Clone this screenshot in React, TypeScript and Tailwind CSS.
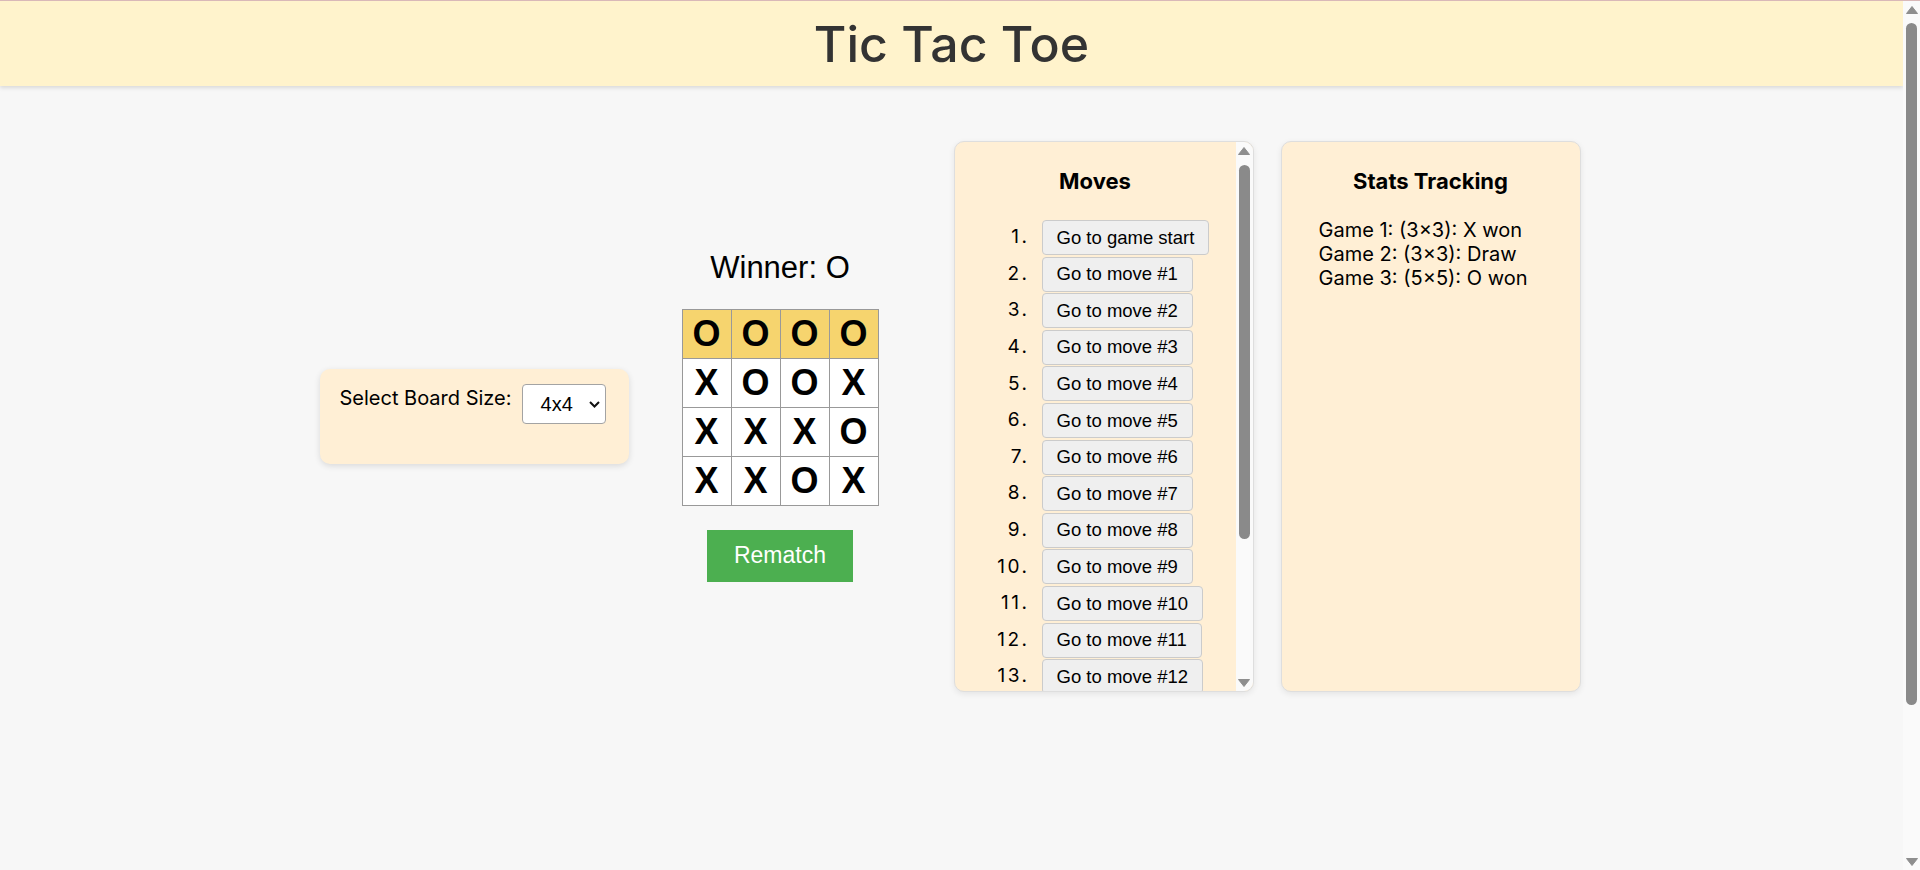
import React from 'react';

type Cell = 'X' | 'O';

const board: Cell[] = ['O', 'O', 'O', 'O', 'X', 'O', 'O', 'X', 'X', 'X', 'X', 'O', 'X', 'X', 'O', 'X'];
const winLine = [0, 1, 2, 3];

const history = Array.from({ length: 17 }, (_, i) => (i === 0 ? 'Go to game start' : `Go to move #${i}`));

const stats = ['Game 1: (3×3): X won', 'Game 2: (3×3): Draw', 'Game 3: (5×5): O won'];

// classic scrollbar look, drawn since the headless page hides native ones
const Scrollbar: React.FC<{ thumbTop: number; thumbHeight: number; className?: string }> = ({
  thumbTop,
  thumbHeight,
  className = '',
}) => (
  <div className={`flex w-[17px] shrink-0 flex-col bg-[#fafafa] ${className}`}>
    <div className="flex h-[17px] items-center justify-center">
      <svg width="12" height="8" viewBox="0 0 12 8">
        <polygon points="6,0.5 11.5,7.5 0.5,7.5" fill="#8e8e8e" strokeLinejoin="round" stroke="#8e8e8e" strokeWidth="1" />
      </svg>
    </div>
    <div className="flex-1">
      <div className="mx-auto w-[11px] rounded-full bg-[#8a8a8a]" style={{ marginTop: thumbTop, height: thumbHeight }} />
    </div>
    <div className="flex h-[17px] items-center justify-center">
      <svg width="12" height="8" viewBox="0 0 12 8">
        <polygon points="0.5,0.5 11.5,0.5 6,7.5" fill="#8e8e8e" strokeLinejoin="round" stroke="#8e8e8e" strokeWidth="1" />
      </svg>
    </div>
  </div>
);

const BoardSizePicker: React.FC = () => (
  <div className="flex h-[95px] w-[309px] shrink-0 items-start gap-[10px] rounded-[10px] bg-[#ffefd5] px-[20px] pt-[15px] shadow-[0_2px_6px_rgba(0,0,0,0.12)]">
    <label className="text-[20px] leading-[29px]">Select Board Size:</label>
    <div className="relative h-[40px] w-[84px] rounded-[4px] border border-[#a3a3a3] bg-white">
      <span className="absolute left-[18px] top-[8px] font-['Liberation_Sans',Arial,sans-serif] text-[20px] leading-[22px]">4x4</span>
      <svg className="absolute right-[5px] top-[16px]" width="11" height="7" viewBox="0 0 11 7">
        <polyline points="1,1 5.5,5.5 10,1" fill="none" stroke="#111" strokeWidth="2" />
      </svg>
    </div>
  </div>
);

const Game: React.FC = () => (
  <div className="ml-[53px] flex shrink-0 flex-col items-center">
    <div className="font-['Liberation_Sans',Arial,sans-serif] text-[31px] leading-none">Winner: O</div>
    <div className="mt-[26px] grid grid-cols-4 gap-px bg-[#999] p-px">
      {board.map((v, i) => (
        <div
          key={i}
          className={`flex h-[48px] w-[48px] items-center justify-center font-['Liberation_Sans',Arial,sans-serif] text-[36px] font-bold leading-none ${
            winLine.includes(i) ? 'bg-[#f6d46e]' : 'bg-white'
          }`}
        >
          {v}
        </div>
      ))}
    </div>
    <button className="mt-[24px] h-[52px] w-[146px] bg-[#4caf50] font-['Liberation_Sans',Arial,sans-serif] text-[23px] text-white">
      Rematch
    </button>
  </div>
);

const Moves: React.FC = () => (
  <div className="ml-[75px] flex h-[551px] w-[300px] shrink-0 overflow-hidden rounded-[10px] border border-[#dedede] bg-[#ffefd5] shadow-[0_2px_6px_rgba(0,0,0,0.08)]">
    <div className="min-w-0 flex-1 overflow-hidden">
      <h2 className="pt-[28px] text-center text-[22px] font-bold leading-none">Moves</h2>
      <ol className="mt-[28px]">
        {history.map((label, i) => (
          <li key={i} className="mb-[1.6px] flex items-center">
            <span className="w-[75px] text-right text-[19px] tracking-[2.5px]">{i + 1}.</span>
            <button className="ml-[12px] h-[35px] rounded-[4px] border border-[#cbcbcb] bg-[#efefef] px-[14px] font-['Liberation_Sans',Arial,sans-serif] text-[18.5px] text-black">
              {label}
            </button>
          </li>
        ))}
      </ol>
    </div>
    <Scrollbar thumbTop={6} thumbHeight={374} />
  </div>
);

const Stats: React.FC = () => (
  <div className="ml-[27px] h-[551px] w-[300px] shrink-0 rounded-[10px] border border-[#dedede] bg-[#ffefd5] shadow-[0_2px_6px_rgba(0,0,0,0.08)]">
    <h2 className="pt-[28px] text-center text-[22px] font-bold leading-none">Stats Tracking</h2>
    <ul className="mt-[26px] pl-[37px] text-[20px] leading-[24px]">
      {stats.map((s) => (
        <li key={s}>{s}</li>
      ))}
    </ul>
  </div>
);

export default function App() {
  return (
    <div className="flex h-[870px] overflow-hidden border-t border-[#d9b8b8] font-['Inter',sans-serif] text-black">
      <div className="min-w-0 flex-1 bg-[#f7f7f7]">
        <header className="flex h-[85px] items-center justify-center bg-[#fff3cc] shadow-[0_2px_4px_rgba(0,0,0,0.12)]">
          <h1 className="text-[50px] font-medium leading-none text-[#333]">Tic Tac Toe</h1>
        </header>
        <main className="mt-[55px] flex items-center justify-center pr-[3px]">
          <BoardSizePicker />
          <Game />
          <Moves />
          <Stats />
        </main>
      </div>
      <Scrollbar thumbTop={5} thumbHeight={682} />
    </div>
  );
}
